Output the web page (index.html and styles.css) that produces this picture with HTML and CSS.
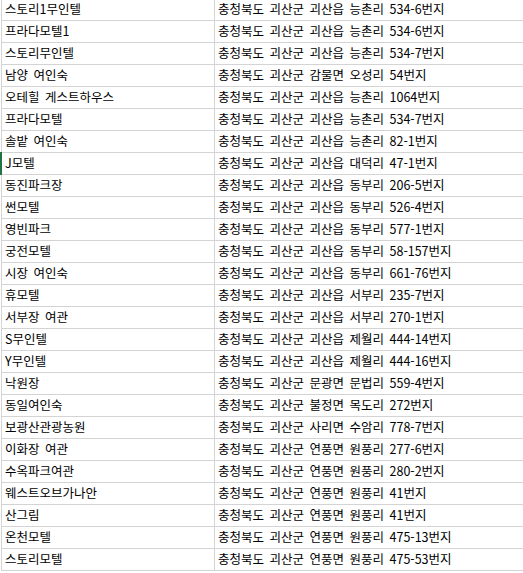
FILE: index.html
```html
<!DOCTYPE html>
<html lang="ko">
<head>
<meta charset="utf-8">
<link rel="stylesheet" href="styles.css">
</head>
<body>
<div class="sheet">
  <div class="row"><div class="cell name">스토리1무인텔</div><div class="cell addr">충청북도 괴산군 괴산읍 능촌리 534-6번지</div></div>
  <div class="row"><div class="cell name">프라다모텔1</div><div class="cell addr">충청북도 괴산군 괴산읍 능촌리 534-6번지</div></div>
  <div class="row"><div class="cell name">스토리무인텔</div><div class="cell addr">충청북도 괴산군 괴산읍 능촌리 534-7번지</div></div>
  <div class="row"><div class="cell name">남양 여인숙</div><div class="cell addr">충청북도 괴산군 감물면 오성리 54번지</div></div>
  <div class="row"><div class="cell name">오테힐 게스트하우스</div><div class="cell addr">충청북도 괴산군 괴산읍 능촌리 1064번지</div></div>
  <div class="row"><div class="cell name">프라다모텔</div><div class="cell addr">충청북도 괴산군 괴산읍 능촌리 534-7번지</div></div>
  <div class="row"><div class="cell name">솔밭 여인숙</div><div class="cell addr">충청북도 괴산군 괴산읍 능촌리 82-1번지</div></div>
  <div class="row selected"><div class="cell name">J모텔</div><div class="cell addr">충청북도 괴산군 괴산읍 대덕리 47-1번지</div></div>
  <div class="row"><div class="cell name">동진파크장</div><div class="cell addr">충청북도 괴산군 괴산읍 동부리 206-5번지</div></div>
  <div class="row"><div class="cell name">썬모텔</div><div class="cell addr">충청북도 괴산군 괴산읍 동부리 526-4번지</div></div>
  <div class="row"><div class="cell name">영빈파크</div><div class="cell addr">충청북도 괴산군 괴산읍 동부리 577-1번지</div></div>
  <div class="row"><div class="cell name">궁전모텔</div><div class="cell addr">충청북도 괴산군 괴산읍 동부리 58-157번지</div></div>
  <div class="row"><div class="cell name">시장 여인숙</div><div class="cell addr">충청북도 괴산군 괴산읍 동부리 661-76번지</div></div>
  <div class="row"><div class="cell name">휴모텔</div><div class="cell addr">충청북도 괴산군 괴산읍 서부리 235-7번지</div></div>
  <div class="row"><div class="cell name">서부장 여관</div><div class="cell addr">충청북도 괴산군 괴산읍 서부리 270-1번지</div></div>
  <div class="row"><div class="cell name">S무인텔</div><div class="cell addr">충청북도 괴산군 괴산읍 제월리 444-14번지</div></div>
  <div class="row"><div class="cell name">Y무인텔</div><div class="cell addr">충청북도 괴산군 괴산읍 제월리 444-16번지</div></div>
  <div class="row"><div class="cell name">낙원장</div><div class="cell addr">충청북도 괴산군 문광면 문법리 559-4번지</div></div>
  <div class="row"><div class="cell name">동일여인숙</div><div class="cell addr">충청북도 괴산군 불정면 목도리 272번지</div></div>
  <div class="row"><div class="cell name">보광산관광농원</div><div class="cell addr">충청북도 괴산군 사리면 수암리 778-7번지</div></div>
  <div class="row"><div class="cell name">이화장 여관</div><div class="cell addr">충청북도 괴산군 연풍면 원풍리 277-6번지</div></div>
  <div class="row"><div class="cell name">수옥파크여관</div><div class="cell addr">충청북도 괴산군 연풍면 원풍리 280-2번지</div></div>
  <div class="row"><div class="cell name">웨스트오브가나안</div><div class="cell addr">충청북도 괴산군 연풍면 원풍리 41번지</div></div>
  <div class="row"><div class="cell name">산그림</div><div class="cell addr">충청북도 괴산군 연풍면 원풍리 41번지</div></div>
  <div class="row"><div class="cell name">온천모텔</div><div class="cell addr">충청북도 괴산군 연풍면 원풍리 475-13번지</div></div>
  <div class="row"><div class="cell name">스토리모텔</div><div class="cell addr">충청북도 괴산군 연풍면 원풍리 475-53번지</div></div>
</div>
</body>
</html>
```

FILE: styles.css
```css
html, body {
  margin: 0;
  padding: 0;
  background: #ffffff;
}
body {
  font-family: "Noto Sans CJK KR", "Noto Sans", sans-serif;
  font-size: 12.5px;
  color: #000000;
  overflow: hidden;
}
.sheet {
  margin: -1px 0 0 1px;
  border-left: 1px solid #d4d4d4;
}
.row {
  display: grid;
  grid-template-columns: 213px 1fr;
  height: 21px;
  border-bottom: 1px solid #d4d4d4;
  position: relative;
}
.row.selected::before {
  content: "";
  position: absolute;
  left: -2px;
  top: -1px;
  bottom: -1px;
  width: 2px;
  background: #217346;
}
.cell {
  display: flex;
  align-items: center;
  white-space: nowrap;
  overflow: hidden;
  line-height: 1;
  word-spacing: 2px;
}
.name {
  border-right: 1px solid #d4d4d4;
  padding-left: 3px;
}
.addr {
  padding-left: 3px;
}
```
